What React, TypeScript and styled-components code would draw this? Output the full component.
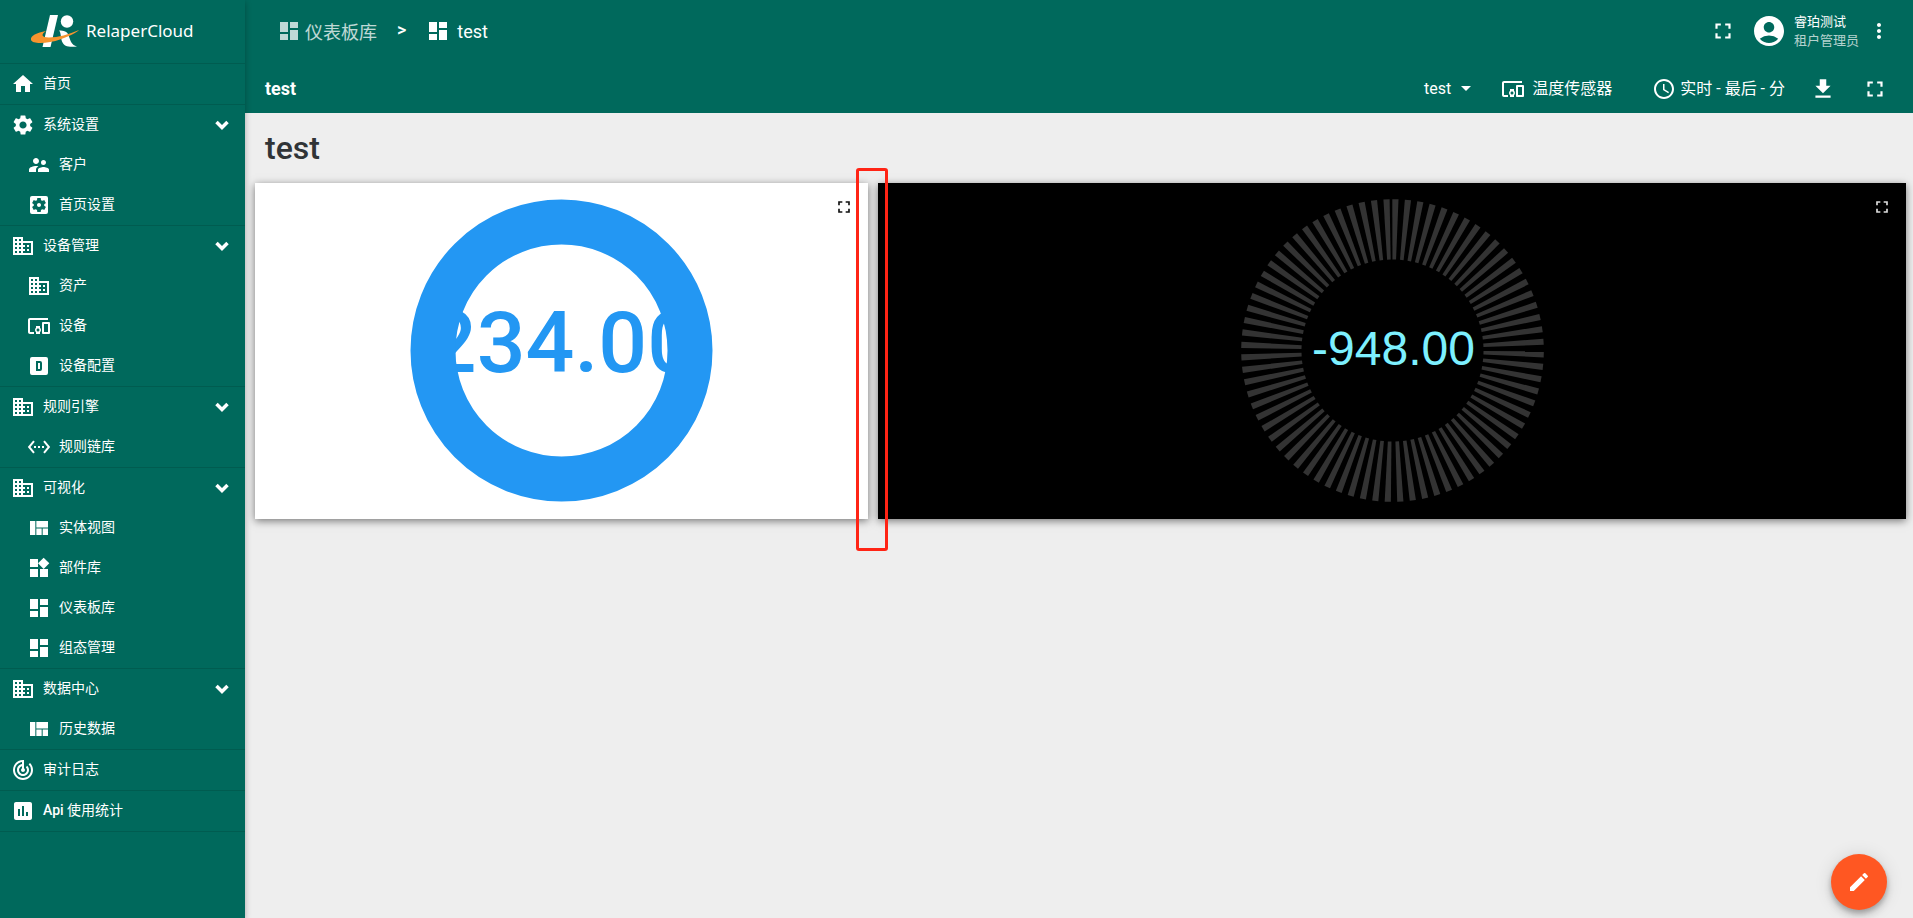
import React from 'react';
import styled, { createGlobalStyle } from 'styled-components';
import type { IconType } from 'react-icons';
import {
  MdHome, MdSettings, MdSupervisorAccount, MdSettingsApplications, MdDomain, MdDevicesOther,
  MdSettingsEthernet, MdViewQuilt, MdWidgets, MdDashboard, MdTrackChanges, MdInsertChart,
  MdFullscreen, MdAccountCircle, MdMoreVert, MdFileDownload, MdAccessTime, MdEdit,
} from 'react-icons/md';

const GREEN = '#00695c';

const GlobalStyle = createGlobalStyle`
  *, *::before, *::after { box-sizing: border-box; }
  body {
    margin: 0;
    background: #eee;
    color: #fff;
    font-family: Roboto, "Noto Sans CJK SC", sans-serif;
  }
  button { font: inherit; color: inherit; background: none; border: 0; padding: 0; cursor: pointer; }
  a { color: inherit; text-decoration: none; }
  svg { display: block; flex: none; }
`;

const Page = styled.div`
  display: flex;
  min-height: 100vh;
`;

const Sidebar = styled.nav`
  flex: none;
  width: 245px;
  background: ${GREEN};
  box-shadow: 0 2px 6px rgba(0, 0, 0, 0.3);
  z-index: 2;
`;

const Brand = styled.a`
  display: flex;
  align-items: center;
  gap: 6px;
  height: 64px;
  padding: 0 0 2px 30px;
  border-bottom: 1px solid rgba(0, 0, 0, 0.12);
  font-family: "Noto Sans", sans-serif;
  font-size: 17px;
`;

const NavList = styled.ul`
  list-style: none;
  margin: 0;
  padding: 0;
`;

const NavGroup = styled.li`
  border-bottom: 1px solid rgba(0, 0, 0, 0.12);
`;

const navRow = `
  display: flex;
  align-items: center;
  gap: 8px;
  width: 100%;
  height: 40px;
  font-size: 14px;
  text-align: left;
`;

const NavLink = styled.a<{ $child?: boolean }>`
  ${navRow}
  padding: 0 16px 0 ${(p) => (p.$child ? 27 : 11)}px;
`;

const NavToggle = styled.button`
  ${navRow}
  padding: 0 16px 0 11px;
`;

const NavLabel = styled.span`
  flex: 1;
  line-height: 20px;
  padding-bottom: 2px;
`;

const LatinWord = styled.span`
  font-weight: 500;
`;

const Main = styled.div`
  flex: 1;
  min-width: 0;
  display: flex;
  flex-direction: column;
`;

const Bar = styled.header<{ $h: number }>`
  display: flex;
  align-items: center;
  justify-content: space-between;
  height: ${(p) => p.$h}px;
  background: ${GREEN};
`;

const Crumbs = styled.div`
  display: flex;
  align-items: center;
  padding: 0 0 2px 32px;
  font-size: 18px;
`;

const Crumb = styled.a<{ $faded?: boolean }>`
  display: flex;
  align-items: center;
  gap: ${(p) => (p.$faded ? 4 : 7)}px;
  opacity: ${(p) => (p.$faded ? 0.75 : 1)};
`;

const CrumbSeparator = styled.span`
  padding: 0 20px 4px 20px;
  font-weight: 500;
`;

const UserArea = styled.div`
  display: flex;
  align-items: center;
  padding: 0 22px 2px 0;
`;

const Avatar = styled.button`
  display: flex;
  align-items: center;
  gap: 7px;
  margin: 0 8px 0 15px;
  text-align: left;
`;

const UserText = styled.span`
  display: flex;
  flex-direction: column;
  font-size: 13px;
  line-height: 19px;
`;

const UserRole = styled.span`
  opacity: 0.7;
`;

const BarTitle = styled.span`
  padding-left: 20px;
  font-size: 18px;
  font-weight: 700;
`;

const Tools = styled.div`
  display: flex;
  align-items: center;
  padding-right: 25px;
  font-size: 16px;
`;

const ToolButton = styled.button<{ $gap: number; $after: number }>`
  display: flex;
  align-items: center;
  gap: ${(p) => p.$gap}px;
  margin-right: ${(p) => p.$after}px;
  line-height: 24px;
`;

const Caret = styled.span`
  border: 5px solid transparent;
  border-top-color: #fff;
  border-bottom: 0;
`;

const Content = styled.main`
  flex: 1;
  position: relative;
  padding: 14px 7px 0 10px;
`;

const Heading = styled.h1`
  margin: 0 0 14px 10px;
  color: #303437;
  font-size: 32px;
  line-height: 42px;
  font-weight: 500;
`;

const WidgetGrid = styled.div`
  position: relative;
  display: grid;
  grid-template-columns: 613fr 1028fr;
  gap: 10px;
`;

const Widget = styled.section<{ $dark?: boolean }>`
  position: relative;
  display: flex;
  justify-content: center;
  padding: 16px 0 17px;
  background: ${(p) => (p.$dark ? '#000' : '#fff')};
  color: ${(p) => (p.$dark ? '#ddd' : '#111')};
  box-shadow: 0 2px 8px rgba(0, 0, 0, 0.5);
`;

const WidgetAction = styled.button`
  position: absolute;
  top: 14px;
  right: 14px;
`;

const Highlight = styled.div`
  position: absolute;
  top: -15px;
  bottom: -32px;
  left: calc((100% - 10px) * 613 / 1641 - 12px);
  width: 32px;
  border: 3px solid #ff2415;
  border-radius: 3px;
  pointer-events: none;
`;

const EditButton = styled.button`
  position: fixed;
  right: 26px;
  bottom: 8px;
  display: grid;
  place-items: center;
  width: 56px;
  height: 56px;
  border-radius: 50%;
  background: #ff5722;
  box-shadow: 0 3px 5px rgba(0, 0, 0, 0.2), 0 6px 10px rgba(0, 0, 0, 0.14), 0 1px 18px rgba(0, 0, 0, 0.12);
`;

const Logo = () => (
  <svg width="50" height="34" viewBox="0 0 50 34" aria-hidden="true">
    <path d="M20 1h8L20.500 33h-8z" fill="#fff" />
    <circle cx="37" cy="7.500" r="6.200" fill="#fff" />
    <path d="M29 16.500c5 0 8 1 9.500 4.500 2 6 3 10 8.500 11.500-8 1-13 0-15-5-1.500-5-1-9-3-11z" fill="#fff" />
    <path d="M16 17C7 18.500 0 22 1 26c2 5 19 3 29-.5 9-3 17-7 19-9.500-10 4.500-21 7.500-30 7.500-8 0-8-3.500-3-6.500z" fill="#f7942e" />
  </svg>
);

const LetterBox = ({ size = 22 }: { size?: number | string }) => (
  <svg width={size} height={size} viewBox="0 0 24 24" fill="currentColor" aria-hidden="true">
    <path fillRule="evenodd" d="M5 3h14a2 2 0 0 1 2 2v14a2 2 0 0 1-2 2H5a2 2 0 0 1-2-2V5a2 2 0 0 1 2-2zM9 7v10h4a2 2 0 0 0 2-2V9a2 2 0 0 0-2-2zm2 2h2v6h-2z" />
  </svg>
);

const Chevron = () => (
  <svg width="14" height="10" viewBox="0 0 14 10" fill="none" stroke="#fff" strokeWidth="3.500" aria-hidden="true">
    <path d="M1.500 2 7 7.500 12.500 2" />
  </svg>
);

type Entry = { latin?: string; label: string; icon: IconType | typeof LetterBox; children?: Entry[] };

const menu: Entry[] = [
  { label: '首页', icon: MdHome },
  { label: '系统设置', icon: MdSettings, children: [
    { label: '客户', icon: MdSupervisorAccount },
    { label: '首页设置', icon: MdSettingsApplications },
  ] },
  { label: '设备管理', icon: MdDomain, children: [
    { label: '资产', icon: MdDomain },
    { label: '设备', icon: MdDevicesOther },
    { label: '设备配置', icon: LetterBox },
  ] },
  { label: '规则引擎', icon: MdDomain, children: [
    { label: '规则链库', icon: MdSettingsEthernet },
  ] },
  { label: '可视化', icon: MdDomain, children: [
    { label: '实体视图', icon: MdViewQuilt },
    { label: '部件库', icon: MdWidgets },
    { label: '仪表板库', icon: MdDashboard },
    { label: '组态管理', icon: MdDashboard },
  ] },
  { label: '数据中心', icon: MdDomain, children: [
    { label: '历史数据', icon: MdViewQuilt },
  ] },
  { label: '审计日志', icon: MdTrackChanges },
  { latin: 'Api', label: ' 使用统计', icon: MdInsertChart },
];

const NavEntry = ({ entry }: { entry: Entry }) => {
  const Icon = entry.icon;
  if (!entry.children) {
    return (
      <NavGroup>
        <NavLink href="#">
          <Icon size={24} />
          <NavLabel>{entry.latin && <LatinWord>{entry.latin}</LatinWord>}{entry.label}</NavLabel>
        </NavLink>
      </NavGroup>
    );
  }
  return (
    <NavGroup>
      <NavToggle type="button" aria-expanded="true">
        <Icon size={24} /><NavLabel>{entry.label}</NavLabel><Chevron />
      </NavToggle>
      <NavList>
        {entry.children.map(({ label, icon: ChildIcon }) => (
          <li key={label}>
            <NavLink href="#" $child><ChildIcon size={24} /><NavLabel>{label}</NavLabel></NavLink>
          </li>
        ))}
      </NavList>
    </NavGroup>
  );
};

const DonutGauge = () => (
  <svg width="303" height="303" viewBox="0 0 303 303">
    <text x="152" y="173" textAnchor="middle" fontFamily="Roboto" fontSize="86" fontWeight="500" fill="#2397f3">234.00</text>
    <circle cx="151.500" cy="151.500" r="128.500" fill="none" stroke="#2397f3" strokeWidth="45" />
  </svg>
);

const TICKS = 76;
const TICK_START = 1.1;
const TICK_STEP = 4.755;

const DigitalGauge = () => (
  <svg width="303" height="303" viewBox="-151.500 -151.500 303 303">
    {Array.from({ length: TICKS }, (_, i) => (
      <path
        key={i}
        d="M-1.800-91H1.800L3.100-151.300H-3.100Z"
        fill="#333"
        transform={`rotate(${TICK_START + i * TICK_STEP})`}
      />
    ))}
    <text x="1" y="14" textAnchor="middle" fontFamily="Liberation Sans" fontSize="48" fill="#7df0ff">-948.00</text>
  </svg>
);

export default function App() {
  return (
    <Page>
      <GlobalStyle />
      <Sidebar>
        <Brand href="#"><Logo />RelaperCloud</Brand>
        <NavList>
          {menu.map((entry) => <NavEntry key={entry.label} entry={entry} />)}
        </NavList>
      </Sidebar>
      <Main>
        <Bar $h={64}>
          <Crumbs>
            <Crumb href="#" $faded><MdDashboard size={24} />仪表板库</Crumb>
            <CrumbSeparator>&gt;</CrumbSeparator>
            <Crumb href="#"><MdDashboard size={24} />test</Crumb>
          </Crumbs>
          <UserArea>
            <button type="button" aria-label="全屏"><MdFullscreen size={26} /></button>
            <Avatar type="button">
              <MdAccountCircle size={36} />
              <UserText><span>睿珀测试</span><UserRole>租户管理员</UserRole></UserText>
            </Avatar>
            <button type="button" aria-label="更多"><MdMoreVert size={24} /></button>
          </UserArea>
        </Bar>
        <Bar $h={49}>
          <BarTitle>test</BarTitle>
          <Tools>
            <ToolButton type="button" $gap={10} $after={30}>test<Caret /></ToolButton>
            <ToolButton type="button" $gap={7} $after={40}><MdDevicesOther size={24} />温度传感器</ToolButton>
            <ToolButton type="button" $gap={4} $after={25}><MdAccessTime size={24} />实时 - 最后 - 分</ToolButton>
            <ToolButton type="button" $gap={0} $after={26} aria-label="下载"><MdFileDownload size={26} /></ToolButton>
            <ToolButton type="button" $gap={0} $after={0} aria-label="全屏"><MdFullscreen size={26} /></ToolButton>
          </Tools>
        </Bar>
        <Content>
          <Heading>test</Heading>
          <WidgetGrid>
            <Widget>
              <DonutGauge />
              <WidgetAction type="button" aria-label="全屏"><MdFullscreen size={20} /></WidgetAction>
            </Widget>
            <Widget $dark>
              <DigitalGauge />
              <WidgetAction type="button" aria-label="全屏"><MdFullscreen size={20} /></WidgetAction>
            </Widget>
            <Highlight />
          </WidgetGrid>
          <EditButton type="button" aria-label="编辑"><MdEdit size={24} /></EditButton>
        </Content>
      </Main>
    </Page>
  );
}
